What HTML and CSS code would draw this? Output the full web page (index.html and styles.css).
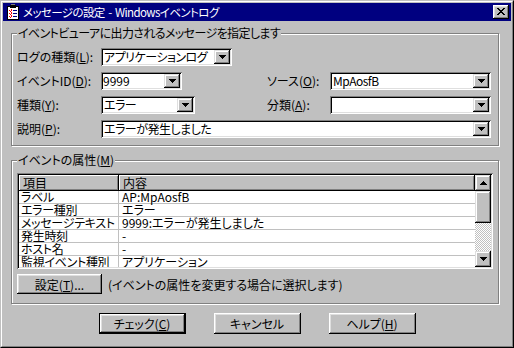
FILE: index.html
```html
<!DOCTYPE html>
<html lang="ja">
<head>
<meta charset="utf-8">
<title>メッセージの設定</title>
<link rel="stylesheet" href="styles.css">
</head>
<body>
<div class="window">
  <div class="frame">
    <div class="titlebar">
      <svg class="app-icon" width="16" height="16" viewBox="0 0 16 16" shape-rendering="crispEdges">
        <rect x="3" y="2" width="12" height="14" fill="#000"/>
        <rect x="4" y="3" width="10" height="12" fill="#fff"/>
        <rect x="6" y="1" width="6" height="3" fill="#000"/>
        <rect x="7" y="0" width="4" height="1" fill="#808080"/>
        <rect x="5" y="6" width="1" height="1" fill="#f00"/><rect x="6" y="7" width="1" height="1" fill="#f00"/><rect x="7" y="5" width="1" height="2" fill="#f00"/>
        <rect x="5" y="9" width="1" height="1" fill="#f00"/><rect x="6" y="10" width="1" height="1" fill="#f00"/><rect x="7" y="8" width="1" height="2" fill="#f00"/>
        <rect x="5" y="12" width="1" height="1" fill="#f00"/><rect x="6" y="13" width="1" height="1" fill="#f00"/><rect x="7" y="11" width="1" height="2" fill="#f00"/>
        <rect x="9" y="6" width="4" height="1" fill="#000080"/>
        <rect x="9" y="9" width="4" height="1" fill="#000080"/>
        <rect x="9" y="12" width="4" height="1" fill="#000080"/>
      </svg>
      <span class="title-text">メッセージの設定 - Windowsイベントログ</span>
      <span class="close-btn">
        <svg width="8" height="7" viewBox="0 0 8 7" shape-rendering="crispEdges">
          <rect x="0" y="0" width="2" height="1"/><rect x="6" y="0" width="2" height="1"/>
          <rect x="1" y="1" width="2" height="1"/><rect x="5" y="1" width="2" height="1"/>
          <rect x="2" y="2" width="4" height="1"/>
          <rect x="3" y="3" width="2" height="1"/>
          <rect x="2" y="4" width="4" height="1"/>
          <rect x="1" y="5" width="2" height="1"/><rect x="5" y="5" width="2" height="1"/>
          <rect x="0" y="6" width="2" height="1"/><rect x="6" y="6" width="2" height="1"/>
        </svg>
      </span>
    </div>

    <div class="content">
      <section class="group group-msg">
        <div class="group-title">イベントビューアに出力されるメッセージを指定します</div>
        <div class="form-grid">
          <span class="lbl row-start">ログの種類(<u>L</u>):</span>
          <div class="combo w-log"><span class="combo-text">アプリケーションログ</span><span class="combo-btn"><svg width="7" height="4" viewBox="0 0 7 4" shape-rendering="crispEdges"><path d="M0 0h7v1h-1v1h-1v1h-1v1h-1v-1h-1v-1h-1v-1h-1z"/></svg></span></div>

          <span class="lbl row-start">イベントID(<u>D</u>):</span>
          <div class="combo w-id"><span class="combo-text tight">9999</span><span class="combo-btn"><svg width="7" height="4" viewBox="0 0 7 4" shape-rendering="crispEdges"><path d="M0 0h7v1h-1v1h-1v1h-1v1h-1v-1h-1v-1h-1v-1h-1z"/></svg></span></div>
          <span class="lbl">ソース(<u>O</u>):</span>
          <div class="combo"><span class="combo-text">MpAosfB</span><span class="combo-btn"><svg width="7" height="4" viewBox="0 0 7 4" shape-rendering="crispEdges"><path d="M0 0h7v1h-1v1h-1v1h-1v1h-1v-1h-1v-1h-1v-1h-1z"/></svg></span></div>

          <span class="lbl row-start">種類(<u>Y</u>):</span>
          <div class="combo w-type"><span class="combo-text">エラー</span><span class="combo-btn"><svg width="7" height="4" viewBox="0 0 7 4" shape-rendering="crispEdges"><path d="M0 0h7v1h-1v1h-1v1h-1v1h-1v-1h-1v-1h-1v-1h-1z"/></svg></span></div>
          <span class="lbl">分類(<u>A</u>):</span>
          <div class="combo"><span class="combo-text"></span><span class="combo-btn"><svg width="7" height="4" viewBox="0 0 7 4" shape-rendering="crispEdges"><path d="M0 0h7v1h-1v1h-1v1h-1v1h-1v-1h-1v-1h-1v-1h-1z"/></svg></span></div>

          <span class="lbl row-start">説明(<u>P</u>):</span>
          <div class="combo span-rest"><span class="combo-text">エラーが発生しました</span><span class="combo-btn"><svg width="7" height="4" viewBox="0 0 7 4" shape-rendering="crispEdges"><path d="M0 0h7v1h-1v1h-1v1h-1v1h-1v-1h-1v-1h-1v-1h-1z"/></svg></span></div>
        </div>
      </section>

      <section class="group group-attr">
        <div class="group-title">イベントの属性(<u>M</u>)</div>
        <div class="listview">
          <div class="lv-main">
            <div class="lv-head">
              <span class="lv-hcell">項目</span>
              <span class="lv-hcell">内容</span>
            </div>
            <div class="lv-row"><span class="c1">ラベル</span><span class="c2">AP:MpAosfB</span></div>
            <div class="lv-row"><span class="c1">エラー種別</span><span class="c2">エラー</span></div>
            <div class="lv-row"><span class="c1">メッセージテキスト</span><span class="c2">9999:エラーが発生しました</span></div>
            <div class="lv-row"><span class="c1">発生時刻</span><span class="c2">-</span></div>
            <div class="lv-row"><span class="c1">ホスト名</span><span class="c2">-</span></div>
            <div class="lv-row"><span class="c1">監視イベント種別</span><span class="c2">アプリケーション</span></div>
          </div>
          <div class="scrollbar">
            <span class="sb-btn"><svg width="7" height="4" viewBox="0 0 7 4" shape-rendering="crispEdges"><path d="M3 0h1v1h1v1h1v1h1v1h-7v-1h1v-1h1v-1h1z"/></svg></span>
            <span class="sb-thumb"></span>
            <span class="sb-track"></span>
            <span class="sb-btn"><svg width="7" height="4" viewBox="0 0 7 4" shape-rendering="crispEdges"><path d="M0 0h7v1h-1v1h-1v1h-1v1h-1v-1h-1v-1h-1v-1h-1z"/></svg></span>
          </div>
        </div>
        <div class="settings-row">
          <button class="btn btn-settings">設定(<u>T</u>)...</button>
          <span class="hint">(イベントの属性を変更する場合に選択します)</span>
        </div>
      </section>

      <div class="actions">
        <button class="btn btn-action btn-default">チェック(<u>C</u>)</button>
        <button class="btn btn-action">キャンセル</button>
        <button class="btn btn-action">ヘルプ(<u>H</u>)</button>
      </div>
    </div>
  </div>
</div>
</body>
</html>
```

FILE: styles.css
```css
* { box-sizing: border-box; }

html, body {
  margin: 0;
  padding: 0;
  background: #c0c0c0;
}

body {
  font-family: "Noto Sans CJK JP", "Liberation Sans", sans-serif;
  font-size: 12px;
  font-feature-settings: "palt";
  color: #000;
}

u { text-decoration: underline; text-underline-offset: 1px; }

.window {
  width: 514px;
  height: 348px;
  background: #c0c0c0;
  border: 1px solid;
  border-color: #c0c0c0 #000 #000 #c0c0c0;
}

.frame {
  height: 100%;
  border: 1px solid;
  border-color: #fff #808080 #808080 #fff;
  padding: 1px;
  display: flex;
  flex-direction: column;
}

/* title bar */
.titlebar {
  height: 18px;
  background: #000080;
  color: #fff;
  display: flex;
  align-items: center;
  padding: 0 2px 0 1px;
}

.app-icon { display: block; flex: none; }

.title-text {
  flex: 1;
  margin-left: 3px;
  font-size: 11.5px;
  letter-spacing: -0.6px;
  word-spacing: 1.5px;
  line-height: 16px;
  white-space: nowrap;
}

.close-btn {
  width: 16px;
  height: 14px;
  background: #c0c0c0;
  box-shadow: inset -1px -1px #000, inset 1px 1px #fff, inset -2px -2px #808080, inset 2px 2px #dfdfdf;
  display: flex;
  align-items: flex-start;
  justify-content: flex-start;
  padding: 3px 0 0 4px;
}
.close-btn svg { display: block; fill: #000; }

/* content */
.content {
  flex: 1;
  padding: 12px 0 0 8px;
  display: flex;
  flex-direction: column;
}

.group {
  width: 488px;
  border: 1px solid #808080;
  box-shadow: inset 1px 1px #fff, 1px 1px #fff;
}

.group-title {
  width: fit-content;
  margin: -7px 0 0 5px;
  padding: 0 1px;
  background: #c0c0c0;
  line-height: 12px;
  white-space: nowrap;
}

.group-msg {
  padding: 0 0 7px 0;
}
.group-msg .group-title { margin-bottom: 9px; letter-spacing: -0.6px; }

.form-grid {
  display: grid;
  grid-template-columns: 84px 166px 63px 161px;
  grid-auto-rows: 18px;
  row-gap: 6px;
  padding-left: 5px;
}

.row-start { grid-column-start: 1; }

.lbl {
  line-height: 18px;
  white-space: nowrap;
}

.combo {
  height: 18px;
  background: #fff;
  box-shadow: inset 1px 1px #808080, inset -1px -1px #fff, inset 2px 2px #000, inset -2px -2px #dfdfdf;
  display: flex;
  padding: 2px;
}
.w-log { width: 131px; }
.w-id { width: 81px; }
.w-type { width: 94px; }
.span-rest { grid-column: 2 / 5; }

.combo-text {
  flex: 1;
  padding-left: 1px;
  line-height: 14px;
  letter-spacing: -0.5px;
  white-space: nowrap;
}
.combo-text.tight { padding-left: 0; letter-spacing: 0; }

.combo-btn, .sb-btn {
  flex: none;
  width: 16px;
  height: 14px;
  background: #c0c0c0;
  box-shadow: inset -1px -1px #000, inset 1px 1px #dfdfdf, inset -2px -2px #808080, inset 2px 2px #fff;
  display: flex;
  align-items: center;
  justify-content: center;
}
.combo-btn svg, .sb-btn svg { display: block; fill: #000; }

/* group 2 */
.group-attr {
  margin-top: 14px;
  padding: 0 0 9px 5px;
}
.group-attr .group-title { margin-left: 0; margin-bottom: 7px; }

.listview {
  width: 476px;
  height: 96px;
  background: #fff;
  box-shadow: inset 1px 1px #808080, inset -1px -1px #fff, inset 2px 2px #000, inset -2px -2px #dfdfdf;
  padding: 2px;
  display: flex;
}

.lv-main {
  flex: 1;
  overflow: hidden;
  display: flex;
  flex-direction: column;
}

.lv-head, .lv-row {
  flex: none;
  display: grid;
  grid-template-columns: 100px 1fr;
}

.lv-head { height: 16px; }

.lv-hcell {
  background: #c0c0c0;
  border-right: 1px solid #000;
  border-bottom: 1px solid #000;
  box-shadow: inset 1px 1px #fff, inset -1px -1px #808080;
  line-height: 15px;
  padding-left: 4px;
  white-space: nowrap;
}

.lv-row {
  height: 13px;
  border-bottom: 1px solid #c0c0c0;
  line-height: 12px;
  white-space: nowrap;
}
.lv-row .c1 {
  padding-left: 2px;
  border-right: 1px solid #c0c0c0;
  letter-spacing: -0.3px;
}
.lv-row .c2 { padding-left: 3px; }

.scrollbar {
  flex: none;
  width: 16px;
  display: flex;
  flex-direction: column;
}
.sb-btn { height: 16px; }
.sb-thumb {
  height: 32px;
  background: #c0c0c0;
  box-shadow: inset -1px -1px #000, inset 1px 1px #dfdfdf, inset -2px -2px #808080, inset 2px 2px #fff;
}
.sb-track {
  flex: 1;
  background: repeating-conic-gradient(#fff 0 25%, #c0c0c0 0 50%) 0 0 / 2px 2px;
}

.settings-row {
  display: flex;
  align-items: center;
  gap: 6px;
  margin-top: 5px;
}

.btn {
  font: inherit;
  color: #000;
  background: #c0c0c0;
  border: none;
  padding: 0;
  margin: 0;
  box-shadow: inset -1px -1px #000, inset 1px 1px #fff, inset -2px -2px #808080, inset 2px 2px #dfdfdf;
  white-space: nowrap;
}

.btn-settings { width: 85px; height: 20px; }

.hint { white-space: nowrap; }

.actions {
  display: flex;
  justify-content: center;
  gap: 28px;
  margin-top: 9px;
  padding-right: 8px;
}

.btn-action { width: 87px; height: 21px; }

.btn-default {
  border: 1px solid #000;
  box-shadow: inset -1px -1px #000, inset 1px 1px #fff, inset -2px -2px #808080, inset 2px 2px #dfdfdf;
}
```
